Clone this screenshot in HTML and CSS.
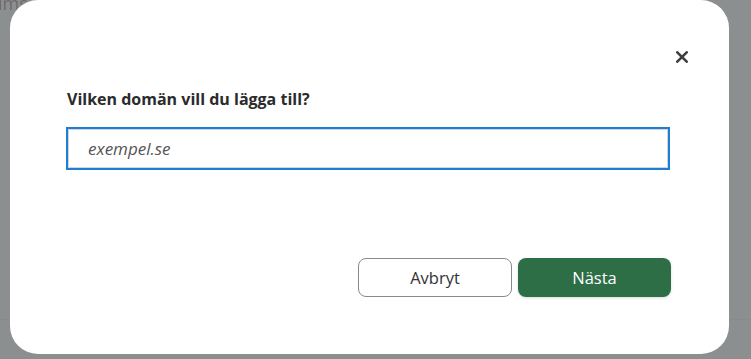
FILE: index.html
```html
<!DOCTYPE html>
<html lang="sv">
<head>
<meta charset="utf-8">
<link rel="stylesheet" href="styles.css">
</head>
<body>
<div class="page">
  <div class="behind">ims</div>
  <div class="backdrop-line"></div>
  <div class="overlay"></div>
  <div class="modal" role="dialog">
    <div class="modal-top">
      <button class="close" aria-label="Stäng">
        <svg width="12" height="12" viewBox="0 0 12 12"><path d="M1.3 1.3 L10.7 10.7 M10.7 1.3 L1.3 10.7" stroke="#3f3f3f" stroke-width="2.6" stroke-linecap="round"/></svg>
      </button>
    </div>
    <div class="modal-body">
      <label class="question" for="domain">Vilken domän vill du lägga till?</label>
      <input id="domain" class="field" type="text" placeholder="exempel.se">
    </div>
    <div class="actions">
      <button class="btn btn-secondary">Avbryt</button>
      <button class="btn btn-primary">Nästa</button>
    </div>
  </div>
</div>
</body>
</html>
```

FILE: styles.css
```css
* { box-sizing: border-box; }
html, body { margin: 0; padding: 0; }
body {
  width: 751px;
  height: 359px;
  overflow: hidden;
  font-family: "Open Sans", "Noto Sans", sans-serif;
  background: #ffffff;
}
.page {
  position: relative;
  width: 751px;
  height: 359px;
  background: #ffffff;
}
.behind {
  position: absolute;
  left: -2px;
  top: -8px;
  font-size: 18px;
  line-height: 22px;
  color: #4a0a20;
}
.backdrop-line {
  position: absolute;
  left: 0;
  right: 0;
  top: 319px;
  height: 1px;
  background: #e4e4e4;
}
.overlay {
  position: absolute;
  inset: 0;
  background: rgba(118, 121, 123, 0.84);
}
.modal {
  position: absolute;
  left: 10px;
  top: 0;
  width: 719px;
  height: 354px;
  background: #ffffff;
  border-radius: 28px;
  display: flex;
  flex-direction: column;
  padding: 0 58px 0 57px;
}
.modal-top {
  display: flex;
  justify-content: flex-end;
  padding-top: 49px;
  margin-right: -19px;
  height: 81px;
}
.close {
  width: 16px;
  height: 16px;
  padding: 0;
  border: 0;
  background: transparent;
  display: flex;
  align-items: center;
  justify-content: center;
  cursor: pointer;
}
.modal-body {
  display: flex;
  flex-direction: column;
}
.question {
  font-size: 16px;
  font-weight: 700;
  color: #2b2b2b;
  line-height: 22px;
  margin-top: 7px;
}
.field {
  margin-top: 19px;
  width: 600px;
  height: 39px;
  border: 1px solid #d4d4d4;
  box-shadow: 0 0 0 2px #1c7fd3;
  outline: none;
  padding: 0 19px;
  font-family: inherit;
  font-size: 17px;
  margin-left: 1px;
}
.field::placeholder {
  font-style: italic;
  color: #555555;
}
.actions {
  display: flex;
  justify-content: flex-end;
  gap: 6px;
  margin-top: 90px;
}
.btn {
  width: 154px;
  height: 39px;
  border-radius: 8px;
  font-family: inherit;
  font-size: 16.5px;
  cursor: pointer;
}
.btn-secondary {
  background: #ffffff;
  border: 1px solid #8a8a8a;
  color: #333333;
}
.btn-primary {
  width: 153px;
  background: #2d6e47;
  border: 0;
  color: #ffffff;
  font-weight: 500;
  box-shadow: 0 1px 3px rgba(0,0,0,0.15);
}
```
